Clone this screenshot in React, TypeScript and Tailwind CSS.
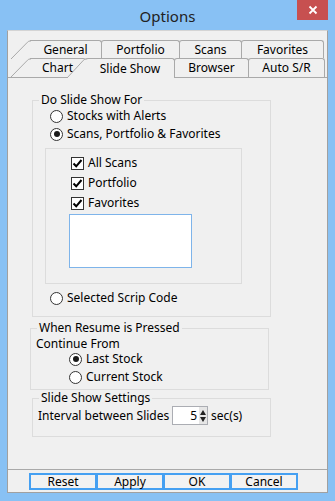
import React from "react";

const font = { fontFamily: '"Noto Sans", "Open Sans", Arial, sans-serif' };

function Radio({ checked, label }: { checked?: boolean; label: string }) {
  return (
    <div className="flex items-center h-[18px]">
      <div className="w-[13px] h-[13px] rounded-full border border-[#333333] bg-white flex items-center justify-center">
        {checked && <div className="w-[6px] h-[6px] rounded-full bg-[#1a1a1a]" />}
      </div>
      <span className="ml-[4px] text-[12px] leading-[16px] text-black">{label}</span>
    </div>
  );
}

function Check({ label }: { label: string }) {
  return (
    <div className="flex items-center h-[20px]">
      <div className="w-[13px] h-[13px] border border-[#333333] bg-white flex items-center justify-center">
        <svg width="11" height="11" viewBox="0 0 11 11">
          <path d="M1.5 5.5 L4.2 8.3 L9.5 2" fill="none" stroke="#000" strokeWidth="2" />
        </svg>
      </div>
      <span className="ml-[4px] text-[12px] leading-[16px] text-black">{label}</span>
    </div>
  );
}

function Group({ title, className, children }: { title: string; className: string; children: React.ReactNode }) {
  return (
    <div className={"relative border border-[#DCDCDC] " + className}>
      <span className="absolute left-[6px] top-[-9px] px-[2px] bg-[#F0F0F0] text-[12px] leading-[16px] text-black">
        {title}
      </span>
      {children}
    </div>
  );
}

function Slant({ bottom = false }: { bottom?: boolean }) {
  return (
    <svg
      className="absolute top-[-1px] left-[-20px]"
      width="21"
      height={bottom ? 21 : 19}
      viewBox={bottom ? "0 0 21 21" : "0 0 21 19"}
    >
      {bottom ? (
        <>
          <path d="M1 20 L17.5 2.2 Q18.6 1 20 1 L21 1 L21 21 L0 21 Z" fill="#F0F0F0" />
          <path d="M1 20 L17.5 2.2 Q18.6 1 20 1 L21 1" fill="none" stroke="#A9A9A9" strokeWidth="1" />
        </>
      ) : (
        <>
          <path d="M1 19 L17.5 2.2 Q18.6 1 20 1 L21 1 L21 19 Z" fill="#F0F0F0" />
          <path d="M1 19 L17.5 2.2 Q18.6 1 20 1 L21 1" fill="none" stroke="#A9A9A9" strokeWidth="1" />
        </>
      )}
    </svg>
  );
}

function Tab({
  label,
  w,
  first,
  selected,
}: {
  label: string;
  w: number;
  first?: boolean;
  selected?: boolean;
}) {
  return (
    <div
      className={
        "relative flex items-center justify-center text-[12px] leading-[16px] text-black bg-[#F0F0F0] border-t border-r border-[#A9A9A9] rounded-tr-[3px] " +
        (first ? "" : "border-l rounded-tl-[3px] -ml-px ") +
        (selected ? "z-10 h-[20px] -mb-px self-start " : "h-full ")
      }
      style={{ width: w }}
    >
      {first && <Slant />}
      {selected && <Slant bottom />}
      <span>{label}</span>
    </div>
  );
}

export default function App() {
  return (
    <div className="w-[335px] h-[501px] bg-[#88C1F4] flex flex-col" style={font}>
      {/* title bar */}
      <div className="relative h-[30px] flex items-center justify-center">
        <span className="text-[15px] leading-[20px] text-[#222222] mt-[1px]">Options</span>
        <div className="absolute right-[7px] top-0 w-[31px] h-[20px] bg-[#C75050] flex items-center justify-center">
          <svg width="10" height="10" viewBox="0 0 10 10">
            <path d="M1.5 1.5 L8.5 8.5 M8.5 1.5 L1.5 8.5" stroke="#fff" strokeWidth="1.8" />
          </svg>
        </div>
      </div>
      {/* client */}
      <div className="mx-[7px] h-[463px] border border-[#A0A0A0] border-t-[#D4D4D4] bg-[#F0F0F0] flex flex-col">
        {/* tab header */}
        <div className="h-[46px] flex flex-col pt-[9px]">
          <div className="h-[18px] flex pl-[22px]">
            <Tab label="General" w={72} first />
            <Tab label="Portfolio" w={79} />
            <Tab label="Scans" w={63} />
            <Tab label="Favorites" w={83} />
          </div>
          <div className="h-[19px] flex pl-[22px]">
            <Tab label="Chart" w={56} first />
            <Tab label="Slide Show" w={90} selected />
            <Tab label="Browser" w={75} />
            <Tab label="Auto S/R" w={77} />
          </div>
        </div>
        {/* panel */}
        <div className="h-[393px] border-t border-b border-[#A9A9A9] flex flex-col">
          <Group title="Do Slide Show For" className="ml-[24px] mt-[22px] w-[239px] h-[217px]">
            <div className="flex flex-col pl-[17px] pt-[6px]">
              <Radio label="Stocks with Alerts" />
              <Radio label="Scans, Portfolio & Favorites" checked />
            </div>
            <div className="ml-[12px] mt-[5px] w-[197px] h-[136px] border border-[#DCDCDC] flex flex-col pl-[25px] pt-[4px]">
              <Check label="All Scans" />
              <Check label="Portfolio" />
              <Check label="Favorites" />
              <div className="-ml-[2px] mt-[1px] w-[123px] h-[54px] bg-white border border-[#7EB4EA]" />
            </div>
            <div className="pl-[17px] mt-[5px]">
              <Radio label="Selected Scrip Code" />
            </div>
          </Group>
          <Group title="When Resume is Pressed" className="ml-[22px] mt-[11px] w-[239px] h-[62px]">
            <div className="pl-[5px] pt-[7px] h-[21px] text-[12px] leading-[16px] text-black">Continue From</div>
            <div className="pl-[38px] flex flex-col">
              <Radio label="Last Stock" checked />
              <Radio label="Current Stock" />
            </div>
          </Group>
          <Group title="Slide Show Settings" className="ml-[24px] mt-[8px] w-[239px] h-[39px]">
            <div className="pl-[5px] pt-[7px] flex items-center h-[26px] text-[12px] leading-[16px] text-black">
              <span className="w-[134px]">Interval between Slides</span>
              <div className="w-[36px] h-[19px] border border-[#ABADB3] bg-white flex items-center justify-end">
                <span className="mr-[2px]">5</span>
                <div className="w-[8px] h-[17px] bg-[#E6E6E6] flex flex-col items-center justify-center gap-[2px]">
                  <svg width="6" height="5" viewBox="0 0 6 5">
                    <path d="M0 5 L3 0 L6 5 Z" fill="#222" />
                  </svg>
                  <svg width="6" height="5" viewBox="0 0 6 5">
                    <path d="M0 0 L3 5 L6 0 Z" fill="#222" />
                  </svg>
                </div>
              </div>
              <span className="ml-[3px]">sec(s)</span>
            </div>
          </Group>
        </div>
        {/* buttons */}
        <div className="flex pl-[21px] pt-[3px]">
          {["Reset", "Apply", "OK", "Cancel"].map((b) => (
            <div
              key={b}
              className="w-[68px] h-[17px] border-2 border-[#45A0F2] bg-[#F2F2F2] flex items-center justify-center text-[12px] leading-[16px] text-black -mr-px"
            >
              {b}
            </div>
          ))}
        </div>
      </div>
    </div>
  );
}
